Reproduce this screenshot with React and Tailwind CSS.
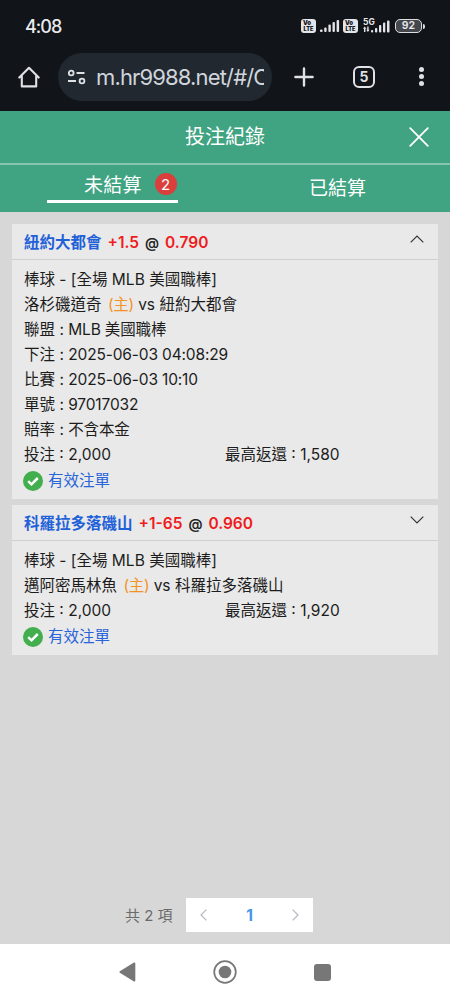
const bets = [
    {
        id: 1,
        pick: "紐約大都會",
        handicap: "+1.5",
        odds: "0.790",
        open: true,
        home: "洛杉磯道奇",
        away: "紐約大都會",
        details: [
            { label: "聯盟", value: "MLB 美國職棒" },
            { label: "下注", value: "2025-06-03 04:08:29" },
            { label: "比賽", value: "2025-06-03 10:10" },
            { label: "單號", value: "97017032" },
            { label: "賠率", value: "不含本金" },
        ],
        stake: "2,000",
        payout: "1,580",
    },
    {
        id: 2,
        pick: "科羅拉多落磯山",
        handicap: "+1-65",
        odds: "0.960",
        open: false,
        home: "邁阿密馬林魚",
        away: "科羅拉多落磯山",
        details: [],
        stake: "2,000",
        payout: "1,920",
    },
];

const VoLte = () => (
    <div className="flex h-[14px] w-[15px] flex-col items-center justify-center rounded-[3px] bg-[#e4e5e8] font-black text-[#111418]">
        <span className="-ml-[3px] text-[6px] leading-[6px]">Vo</span>
        <span className="text-[5.5px] leading-[6px]">LTE</span>
    </div>
);

const Signal = () => (
    <svg className="h-[14px] w-[20px]" viewBox="0 0 20 14" fill="#e4e5e8">
        <rect x="0" y="10.5" width="2.6" height="2.5" rx="1" />
        <rect x="4.2" y="8.5" width="2.4" height="4.5" rx="1" />
        <rect x="8.4" y="5.5" width="2.4" height="7.5" rx="1" />
        <rect x="12.5" y="3" width="2.4" height="10" rx="1" />
        <rect x="16.6" y="1" width="2.5" height="12" rx="1" />
    </svg>
);

const DataSignal = () => (
    <svg className="h-[16px] w-[27px]" viewBox="0 0 27 16" fill="#e4e5e8">
        <text x="0" y="6.6" fontSize="8.5" fontWeight="700" fontFamily="Inter, sans-serif" textLength="12">5G</text>
        <path d="M0 10.800l1.700-2.300 1.700 2.300H2.400V14H1v-3.200zM3.200 11.700h1V8.500h1.400v3.200h1l-1.700 2.300z" />
        <rect x="8" y="12" width="2.2" height="2.500" rx="1" />
        <rect x="12" y="10" width="2.3" height="4.500" rx="1" />
        <rect x="16" y="7" width="2.3" height="7.500" rx="1" />
        <rect x="20" y="4.500" width="2.3" height="10" rx="1" />
        <rect x="24" y="2.500" width="2.5" height="12" rx="1" />
    </svg>
);

const StatusBar = () => (
    <div className="flex h-[52px] items-center justify-between px-[25px] text-[#e8eaed]">
        <span className="pt-px text-[18px] leading-none font-medium tracking-[-1px]">4:08</span>
        <div className="flex items-center">
            <VoLte />
            <div className="w-[4px]" />
            <Signal />
            <div className="w-[3px]" />
            <VoLte />
            <div className="w-[5px]" />
            <DataSignal />
            <div className="w-[5px]" />
            <div className="flex h-[14px] w-[27px] items-center justify-center rounded-[5px] border-[1.5px] border-[#dcdde0] bg-[#44474b] text-[10.5px] leading-none font-semibold">
                92
            </div>
            <div className="ml-px h-[5px] w-[2px] rounded-r bg-[#dcdde0]" />
        </div>
    </div>
);

const BrowserBar = () => (
    <div className="flex h-[59px] items-start pt-px pl-[18px] text-[#dfe1e5]">
        <svg className="mt-[13px] h-[22px] w-[22px]" viewBox="0 0 22 22" fill="none" stroke="currentColor" strokeWidth="2.1" strokeLinejoin="round" strokeLinecap="round">
            <path d="M1.3 11.6L11 1.8l9.7 9.8M3.8 9.8v10.6h14.4V9.8" />
        </svg>
        <div className="ml-[18px] flex h-[48px] w-[214px] items-center overflow-hidden rounded-full bg-[#212830] pr-[8px] pl-[9px]">
            <svg className="h-[16px] w-[20px] shrink-0" viewBox="0 0 20 16" fill="none" stroke="currentColor" strokeWidth="1.8">
                <circle cx="4.2" cy="4" r="2.4" />
                <path d="M9.5 4h8M1 12h8" />
                <circle cx="15" cy="12" r="2.4" />
            </svg>
            <div className="ml-[9px] w-[168px] overflow-hidden text-[22px] leading-[30px] tracking-[-0.85px] whitespace-nowrap text-[#d0d5dc]">
                m.hr9988.net/#/C
            </div>
        </div>
        <svg className="mt-[14px] ml-[22px] h-[20px] w-[20px]" viewBox="0 0 20 20" stroke="currentColor" strokeWidth="2.4" strokeLinecap="round">
            <path d="M10 1.4v17.2M1.4 10h17.2" />
        </svg>
        <div className="mt-[13px] ml-[39px] flex h-[22px] w-[22px] items-center justify-center rounded-[6px] border-[2px] border-[#dfe1e5] text-[14px] leading-none font-bold">
            5
        </div>
        <div className="mt-[14px] ml-[44px] flex flex-col gap-[2px]">
            <span className="h-[5px] w-[5px] rounded-full bg-[#dfe1e5]" />
            <span className="h-[5px] w-[5px] rounded-full bg-[#dfe1e5]" />
            <span className="h-[5px] w-[5px] rounded-full bg-[#dfe1e5]" />
        </div>
    </div>
);

const Chevron = ({ open }) => (
    <svg className="mb-[5px] h-[10px] w-[16px]" viewBox="0 0 16 10" fill="none" stroke="#333" strokeWidth="1.2">
        <path d={open ? "M1.700 8.300L8 2l6.300 6.300" : "M1.700 1.700L8 8l6.300-6.300"} />
    </svg>
);

const BetCard = ({ bet }) => (
    <div className="bg-[#e9e9e9]">
        <div className="flex h-[36px] items-center justify-between border-b border-[#cfcfcf] pr-[13px] pl-3 font-semibold">
            <div className="flex pt-px">
                <span className="font-bold text-[#1f61d8]">{bet.pick}</span>
                <span className="ml-[6px] text-[#ee1c1c]">{bet.handicap}</span>
                <span className="ml-[6px] text-[14px] text-[#222]">@</span>
                <span className="ml-[6px] text-[#ee1c1c]">{bet.odds}</span>
            </div>
            <Chevron open={bet.open} />
        </div>
        <div className="px-3 pt-[7px] pb-[5px]">
            <p>棒球 - [全場 MLB 美國職棒]</p>
            <p>
                {bet.home} <span className="ml-[2px] tracking-[-0.3px] text-[#f39325]">(主)</span> vs {bet.away}
            </p>
            {bet.details.map((item) => (
                <p key={item.label}>
                    {item.label} : <span className="tracking-[-0.15px]">{item.value}</span>
                </p>
            ))}
            <div className="flex">
                <p className="w-[201px]">投注 : {bet.stake}</p>
                <p>最高返還 : {bet.payout}</p>
            </div>
            <div className="flex h-[27px] items-center">
                <span className="-ml-px flex h-[20px] w-[20px] items-center justify-center rounded-full bg-[#43ae4d]">
                    <svg className="h-[12px] w-[12px]" viewBox="0 0 12 12" fill="none" stroke="white" strokeWidth="2.5">
                        <path d="M1.2 6.2L4.500 9.300l6.300-6.300" />
                    </svg>
                </span>
                <span className="ml-[5px] text-[#2864da]">有效注單</span>
            </div>
        </div>
    </div>
);

const App = () => {
    return (
        <div className="flex h-[1000px] w-[450px] flex-col overflow-hidden bg-[#d7d7d7] font-[Inter,'Noto_Sans_CJK_TC',sans-serif]">
            <div className="h-[111px] shrink-0 bg-[#111418]">
                <StatusBar />
                <BrowserBar />
            </div>

            <header className="grid h-[52px] shrink-0 grid-cols-[60px_1fr_60px] items-center bg-[#40a381] text-white">
                <span />
                <h1 className="text-center text-[20px]">投注紀錄</h1>
                <svg className="ml-[19px] h-[20px] w-[20px]" viewBox="0 0 20 20" stroke="currentColor" strokeWidth="1.8" strokeLinecap="round">
                    <path d="M1.2 1.2l17.6 17.6M18.8 1.2L1.2 18.8" />
                </svg>
            </header>

            <nav className="grid h-[49px] shrink-0 grid-cols-2 border-t-2 border-[#85c4ae] bg-[#40a381] text-[19px] text-white">
                <div className="flex flex-col items-center">
                    <div className="flex h-[38px] w-[131px] items-start border-b-[3px] border-white pt-[8px] pl-[37px]">
                        <span className="pt-[3px] leading-none tracking-[0.2px]">未結算</span>
                        <span className="ml-[13px] flex h-[22px] w-[22px] shrink-0 items-center justify-center rounded-full bg-[#db3f3b] text-[15px] leading-none">
                            2
                        </span>
                    </div>
                </div>
                <div className="flex items-center justify-center pt-[2px]">已結算</div>
            </nav>

            <main className="flex flex-1 flex-col justify-between px-3 pt-3 text-[15.5px] leading-[25px] text-[#1c1c1c]">
                <div className="flex flex-col gap-[6px]">
                    {bets.map((bet) => (
                        <BetCard key={bet.id} bet={bet} />
                    ))}
                </div>
                <div className="mb-[12px] ml-[113px] flex items-center text-[#6a6a6a]">
                    <span className="w-[61px] text-[15px]">共 2 項</span>
                    <div className="flex h-[34px] w-[127px] items-center justify-between bg-white px-[14px]">
                        <svg className="h-[12px] w-[7px]" viewBox="0 0 7 12" fill="none" stroke="#b5b8be" strokeWidth="1.2">
                            <path d="M6.4.6L1 6l5.4 5.4" />
                        </svg>
                        <span className="font-bold text-[#4396e8]">1</span>
                        <svg className="h-[12px] w-[7px]" viewBox="0 0 7 12" fill="none" stroke="#b5b8be" strokeWidth="1.2">
                            <path d="M.6.6L6 6 .6 11.4" />
                        </svg>
                    </div>
                </div>
            </main>

            <footer className="flex h-[56px] shrink-0 items-center justify-between bg-white px-[119px]">
                <svg className="h-[20px] w-[17px]" viewBox="0 0 17 20" fill="#777">
                    <path d="M15 .5Q16.300 .2 16.300 1.500V18.500Q16.300 19.800 15 19.400L.8 10.800Q0 10 .8 9.200Z" />
                </svg>
                <svg className="h-[24px] w-[24px]" viewBox="0 0 24 24">
                    <circle cx="12" cy="12" r="10.8" fill="none" stroke="#777" strokeWidth="1.7" />
                    <circle cx="12" cy="12" r="6.3" fill="#777" />
                </svg>
                <div className="h-[17px] w-[17px] rounded-[3px] bg-[#777]" />
            </footer>
        </div>
    );
};

export default App;
